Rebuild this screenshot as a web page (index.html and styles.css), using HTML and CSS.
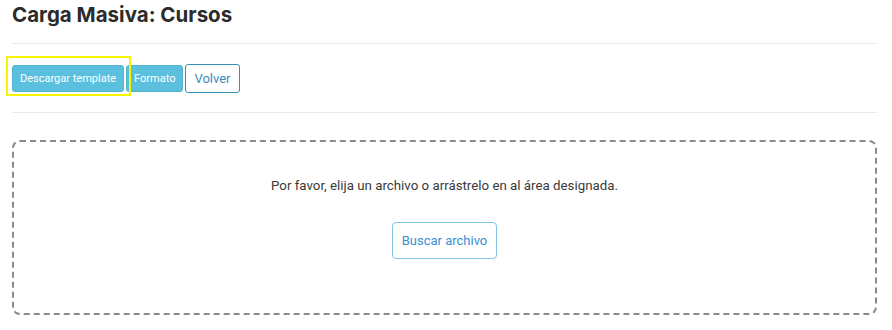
FILE: index.html
```html
<!DOCTYPE html>
<html>
<head>
    <title>Carga Masiva: Cursos</title>
    <link rel="stylesheet" href="styles.css">
</head>
<body>
    <div class="page">
        <!-- Encabezado -->
        <h1 class="page-title">Carga Masiva: Cursos</h1>
        <hr class="divider">

        <!-- Acciones -->
        <div class="toolbar">
            <button class="btn btn-info">Descargar template</button>
            <button class="btn btn-info">Formato</button>
            <button class="btn btn-outline">Volver</button>
            <span class="highlight"></span>
        </div>
        <hr class="divider">

        <!-- Zona de carga -->
        <div class="dropzone">
            <p class="dropzone-text">Por favor, elija un archivo o arrástrelo en al área designada.</p>
            <button class="btn btn-outline btn-lg">Buscar archivo</button>
        </div>
    </div>
</body>
</html>
```

FILE: styles.css
```css
:root {
    --info: #5bc0de;
    --blue: #3c8dbc;
    --line: #e8e8e8;
    --text: #333333;
}

body {
    margin: 0;
    font-family: 'Roboto', 'Liberation Sans', sans-serif;
    color: var(--text);
    background: #ffffff;
}

.page {
    padding: 0 15px 0 12px;
}

.page-title {
    margin: 0;
    padding-top: 1px;
    height: 42px;
    font-family: 'Inter', 'Liberation Sans', sans-serif;
    font-size: 20.5px;
    line-height: 28px;
    font-weight: 700;
    color: #2b2b2b;
}

.divider {
    margin: 0;
    border: 0;
    border-top: 1px solid var(--line);
}

.toolbar {
    position: relative;
    display: flex;
    align-items: center;
    gap: 2px;
    margin: 20px 0 19px;
}

.btn {
    font-family: 'Roboto', 'Liberation Sans', sans-serif;
    border-radius: 3px;
    cursor: pointer;
    background: #ffffff;
}

.btn-info {
    height: 27px;
    padding: 0 7px;
    font-size: 11px;
    color: #ffffff;
    background: var(--info);
    border: 1px solid #4fb3d0;
}

.btn-outline {
    height: 29px;
    padding: 0 8px;
    font-size: 13px;
    color: var(--blue);
    border: 1px solid var(--blue);
}

.btn-lg {
    height: 37px;
    padding: 0 9px;
    color: #3a8fcf;
    border-color: #7fc3e8;
    border-radius: 4px;
}

/* recuadro de resaltado sobre el primer botón */
.highlight {
    position: absolute;
    left: -6px;
    top: -8px;
    width: 121px;
    height: 36px;
    border: 2px solid #f7f400;
    pointer-events: none;
}

.dropzone {
    margin-top: 27px;
    height: 136px;
    border: 2px dashed #8a8a8a;
    border-radius: 8px;
    display: flex;
    flex-direction: column;
    align-items: center;
    padding-top: 35px;
}

.dropzone-text {
    margin: 0 0 27px;
    font-size: 13.3px;
    line-height: 18px;
    color: #3a3a3a;
}
```
